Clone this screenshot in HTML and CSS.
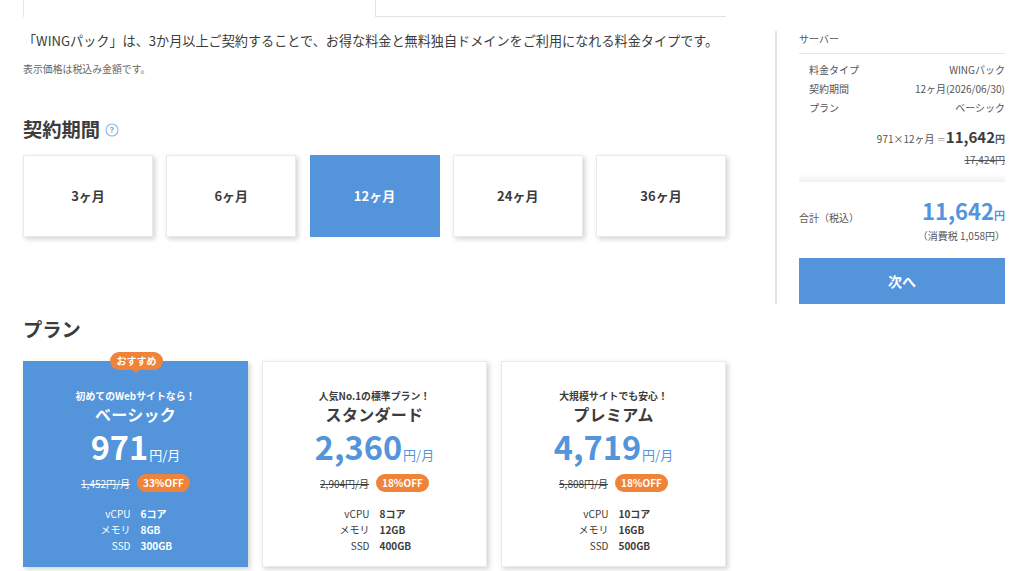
FILE: index.html
```html
<!DOCTYPE html>
<html lang="ja">
<head>
<meta charset="utf-8">
<title>WINGパック</title>
<link rel="stylesheet" href="styles.css">
</head>
<body>
<div class="page">
  <main class="main">
    <div class="tabs"><div class="tab tab-active"></div><div class="tab tab-rest"></div></div>
    <p class="lead">「WINGパック」は、3か月以上ご契約することで、お得な料金と無料独自ドメインをご利用になれる料金タイプです。</p>
    <p class="note">表示価格は税込み金額です。</p>
    <h2 class="heading heading-term">契約期間
      <svg class="help" viewBox="0 0 14 14" width="14" height="14"><circle cx="7" cy="7" r="6" fill="none" stroke="#8db9e4" stroke-width="1.1"/><text x="7" y="9.7" text-anchor="middle" class="help-q">?</text></svg>
    </h2>
    <div class="terms">
      <div class="term">3ヶ月</div>
      <div class="term">6ヶ月</div>
      <div class="term term-on">12ヶ月</div>
      <div class="term">24ヶ月</div>
      <div class="term">36ヶ月</div>
    </div>
    <h2 class="heading heading-plan">プラン</h2>
    <div class="plans">
      <section class="plan plan-on">
        <div class="reco">おすすめ</div>
        <p class="tag">初めてのWebサイトなら！</p>
        <h3 class="name">ベーシック</h3>
        <p class="price"><b>971</b><span>円/月</span></p>
        <p class="was"><s>1,452円/月</s><em>33%OFF</em></p>
        <dl class="spec">
          <dt>vCPU</dt><dd>6コア</dd>
          <dt>メモリ</dt><dd>8GB</dd>
          <dt>SSD</dt><dd>300GB</dd>
        </dl>
      </section>
      <section class="plan">
        <p class="tag">人気No.1の標準プラン！</p>
        <h3 class="name">スタンダード</h3>
        <p class="price"><b>2,360</b><span>円/月</span></p>
        <p class="was"><s>2,904円/月</s><em>18%OFF</em></p>
        <dl class="spec">
          <dt>vCPU</dt><dd>8コア</dd>
          <dt>メモリ</dt><dd>12GB</dd>
          <dt>SSD</dt><dd>400GB</dd>
        </dl>
      </section>
      <section class="plan">
        <p class="tag">大規模サイトでも安心！</p>
        <h3 class="name">プレミアム</h3>
        <p class="price"><b>4,719</b><span>円/月</span></p>
        <p class="was"><s>5,808円/月</s><em>18%OFF</em></p>
        <dl class="spec">
          <dt>vCPU</dt><dd>10コア</dd>
          <dt>メモリ</dt><dd>16GB</dd>
          <dt>SSD</dt><dd>500GB</dd>
        </dl>
      </section>
    </div>
  </main>
  <aside class="side">
    <h4 class="side-title">サーバー</h4>
    <div class="rows">
      <div class="row"><span>料金タイプ</span><span>WINGパック</span></div>
      <div class="row"><span>契約期間</span><span>12ヶ月(2026/06/30)</span></div>
      <div class="row"><span>プラン</span><span>ベーシック</span></div>
    </div>
    <p class="calc">971×12ヶ月 <i>＝</i><b>11,642</b><span>円</span></p>
    <p class="calc-was"><s>17,424円</s></p>
    <div class="fade"></div>
    <div class="total"><span class="total-label">合計（税込）</span><p class="total-price"><b>11,642</b><span>円</span></p></div>
    <p class="tax">（消費税 1,058円）</p>
    <div class="next">次へ</div>
  </aside>
</div>
</body>
</html>
```
FILE: styles.css
```css
* { box-sizing: border-box; }
html, body { margin: 0; padding: 0; }
body {
  width: 1024px; height: 571px; overflow: hidden; background: #fff; color: #3c3c3c;
  font-family: "Noto Sans CJK JP", "Noto Sans", sans-serif;
}
p, h2, h3, h4, dl, dd { margin: 0; font-weight: normal; }
.page { display: flex; align-items: flex-start; padding-left: 23px; }
.main { width: 703px; flex: none; }
.tabs { display: flex; height: 17px; }
.tab { flex: 1; }
.tab-active { border-left: 1px solid #e6e6e6; }
.tab-rest { border-left: 1px solid #e3e3e3; border-bottom: 1px solid #e3e3e3; }
.lead { margin-top: 14px; font-size: 13.14px; line-height: 19px; white-space: nowrap; }
.note { margin-top: 12px; font-size: 9.9px; line-height: 14px; color: #666; }
.heading { font-size: 19.3px; font-weight: 700; line-height: 28px; display: flex; align-items: center; color: #3c3c3c; }
.heading-term { margin-top: 39px; }
.help { margin-left: 5px; margin-top: 2px; }
.help-q { font-size: 8px; fill: #6fa3d8; font-family: "Noto Sans", sans-serif; }
.terms { display: flex; justify-content: space-between; margin-top: 12px; }
.term {
  width: 130px; height: 82px; display: flex; align-items: center; justify-content: center; padding-bottom: 2px;
  font-size: 13px; font-weight: 700; border: 1px solid #eaeaea; box-shadow: 2px 2px 5px rgba(0,0,0,.18); background: #fff;
}
.term-on { background: #5394db; border-color: #5394db; color: #fff; box-shadow: none; }
.heading-plan { margin-top: 78px; }
.plans { display: flex; justify-content: space-between; margin-top: 18px; }
.plan {
  position: relative; width: 225px; height: 206px; padding-top: 27px; text-align: center;
  border: 1px solid #eaeaea; box-shadow: 2px 2px 5px rgba(0,0,0,.18); background: #fff;
}
.plan-on { background: #5394db; border-color: #5394db; color: #fff; }
.reco {
  position: absolute; left: 86px; top: -10px; width: 53px; height: 18px; line-height: 17px;
  background: #ef8339; color: #fff; font-size: 10px; font-weight: 700; border-radius: 9px;
}
.reco::after {
  content: ""; position: absolute; left: 22px; top: 17px;
  border-left: 4px solid transparent; border-right: 4px solid transparent; border-top: 4px solid #ef8339;
}
.tag { font-size: 9.9px; font-weight: 700; line-height: 14px; }
.name { font-size: 16px; font-weight: 700; line-height: 24px; margin-top: -1px; letter-spacing: .3px; }
.price { display: flex; justify-content: center; align-items: baseline; line-height: 32px; margin-top: 4px; color: #5394db; }
.plan-on .price { color: #fff; }
.price b { font-size: 32.5px; font-weight: 700; }
.price span { font-size: 13px; font-weight: 400; margin-left: 1px; }
.was { display: flex; justify-content: center; align-items: center; gap: 7px; margin-top: 3px; font-size: 10px; }
.was em { font-style: normal; font-weight: 700; width: 53px; height: 18px; line-height: 17px; background: #ef8339; color: #fff; border-radius: 9px; }
.spec { display: grid; grid-template-columns: 1fr 1fr; column-gap: 10px; margin-top: 14px; font-size: 10px; line-height: 16px; }
.spec dt { text-align: right; }
.spec dd { text-align: left; font-weight: 700; }
.side { width: 230px; margin-left: 49px; margin-top: 31px; height: 273px; border-left: 2px solid #e5e5e5; padding-left: 22px; font-size: 10px; color: #555; flex: none; }
.side-title { font-size: 10px; line-height: 16px; padding-bottom: 6px; border-bottom: 1px solid #e5e5e5; }
.rows { padding: 6px 0 0 10px; }
.row { display: flex; justify-content: space-between; line-height: 19px; }
.calc { text-align: right; margin-top: 9px; line-height: 22px; }
.calc i { font-style: normal; color: #999; font-size: 9px; }
.calc b { font-size: 15px; font-weight: 700; color: #3c3c3c; margin-left: 0; }
.calc span { font-weight: 700; font-size: 10px; }
.calc-was { text-align: right; line-height: 16px; margin-top: 1px; }
.fade { height: 8px; margin-top: 6px; background: linear-gradient(#fff, #f0f0f0); }
.total { display: flex; justify-content: space-between; align-items: flex-end; margin-top: 13px; }
.total-label { line-height: 20px; margin-bottom: 3px; }
.total-price { color: #5394db; line-height: 30px; }
.total-price b { font-size: 22px; font-weight: 700; }
.total-price span { font-size: 11px; font-weight: 700; }
.tax { text-align: right; line-height: 16px; margin-top: -3px; }
.next { height: 46px; margin-top: 14px; background: #5394db; color: #fff; font-size: 14px; font-weight: 700; display: flex; align-items: center; justify-content: center; }
```
